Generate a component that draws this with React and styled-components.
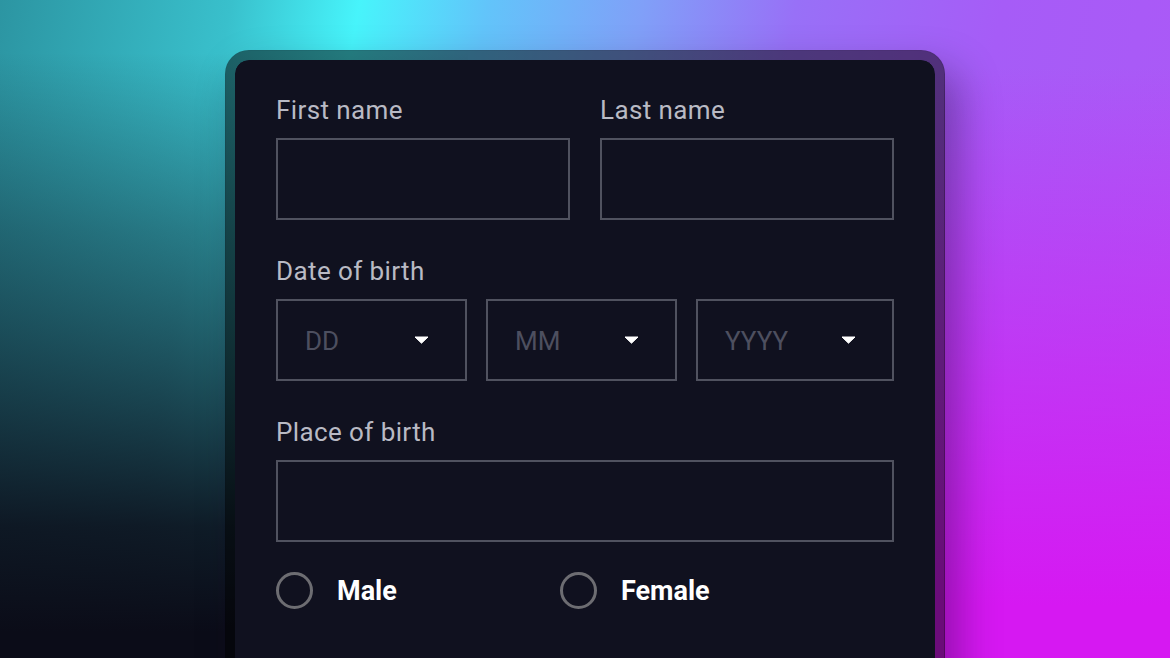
import React from 'react'
import styled, { createGlobalStyle } from 'styled-components'

const Global = createGlobalStyle`
  html, body {
    margin: 0;
    padding: 0;
    overflow: hidden;
    font-family: Roboto, "Noto Sans", sans-serif;
  }
  * { box-sizing: border-box; }
`;

const Page = styled.div`
  width: 1170px;
  height: 658px;
  overflow: hidden;
  display: flex;
  justify-content: center;
  padding-top: 50px;
  background:
    linear-gradient(to bottom, rgba(11,12,24,0) 8%, rgba(11,12,24,0.38) 35%, rgba(11,12,24,0.68) 60%, rgba(11,12,24,0.92) 80%, rgba(11,12,24,1) 96%) left top / 40% 100% no-repeat,
    linear-gradient(to bottom, rgba(214,24,242,0) 10%, rgba(214,24,242,1) 92%) right top / 40% 100% no-repeat,
    linear-gradient(100deg, #2c95a2 0%, #39c0cc 18%, #47f4fb 28%, #62c4fa 38%, #80a0f8 50%, #9870f7 62%, #a65cf7 78%, #ac58f7 100%);
`;

const Card = styled.div`
  width: 720px;
  height: 700px;
  flex-shrink: 0;
  border: 10px solid rgba(0, 0, 0, 0.5);
  border-radius: 24px;
  background: #10111f;
  background-clip: padding-box;
  box-shadow: 14px 20px 40px rgba(20, 0, 40, 0.35);
  padding: 35px 41px 0;
  display: flex;
  flex-direction: column;
  gap: 36px;
`;

const Row = styled.div`
  display: grid;
  grid-template-columns: ${p => p.$cols};
  gap: ${p => p.$gap || '30px'};
`;

const Field = styled.div`
  display: flex;
  flex-direction: column;
  gap: 13px;
`;

const Label = styled.label`
  font-size: 26px;
  line-height: 30px;
  letter-spacing: 0.4px;
  color: #b9bac4;
`;

const TextBox = styled.input`
  display: block;
  width: 100%;
  height: 82px;
  border: 2px solid #50525f;
  background: transparent;
  outline: none;
  color: #fff;
  font: inherit;
  font-size: 26px;
  padding: 0 27px;
`;

const SelectBox = styled.div`
  height: 82px;
  border: 2px solid #50525f;
  display: flex;
  align-items: center;
  justify-content: space-between;
  padding: 0 36px 0 27px;
`;

const Placeholder = styled.span`
  font-size: 26px;
  color: #4d4f5f;
  padding-top: 2px;
`;

const RadioRow = styled.div`
  display: grid;
  grid-template-columns: 284px auto;
  margin-top: -6px;
`;

const RadioOption = styled.label`
  display: flex;
  align-items: center;
  gap: 24px;
`;

const RadioCircle = styled.span`
  width: 37px;
  height: 37px;
  border-radius: 50%;
  border: 3px solid #6d6d72;
`;

const RadioText = styled.span`
  font-size: 27px;
  font-weight: 700;
  color: #ffffff;
`;

const Caret = () => (
  <svg width="15" height="8" viewBox="0 0 15 8">
    <path d="M1 1h13l-6.5 6.2z" fill="#fff" stroke="#fff" strokeWidth="1" strokeLinejoin="round" />
  </svg>
);

const Select = ({ placeholder }) => (
  <SelectBox>
    <Placeholder>{placeholder}</Placeholder>
    <Caret />
  </SelectBox>
);

const App = () => (
  <Page>
    <Global />
    <Card>
      <Row $cols="1fr 1fr">
        <Field>
          <Label>First name</Label>
          <TextBox type="text" />
        </Field>
        <Field>
          <Label>Last name</Label>
          <TextBox type="text" />
        </Field>
      </Row>
      <Field>
        <Label>Date of birth</Label>
        <Row $cols="191px 191px 1fr" $gap="19px">
          <Select placeholder="DD" />
          <Select placeholder="MM" />
          <Select placeholder="YYYY" />
        </Row>
      </Field>
      <Field>
        <Label>Place of birth</Label>
        <TextBox type="text" />
      </Field>
      <RadioRow>
        <RadioOption>
          <RadioCircle />
          <RadioText>Male</RadioText>
        </RadioOption>
        <RadioOption>
          <RadioCircle />
          <RadioText>Female</RadioText>
        </RadioOption>
      </RadioRow>
    </Card>
  </Page>
);

export default App;
